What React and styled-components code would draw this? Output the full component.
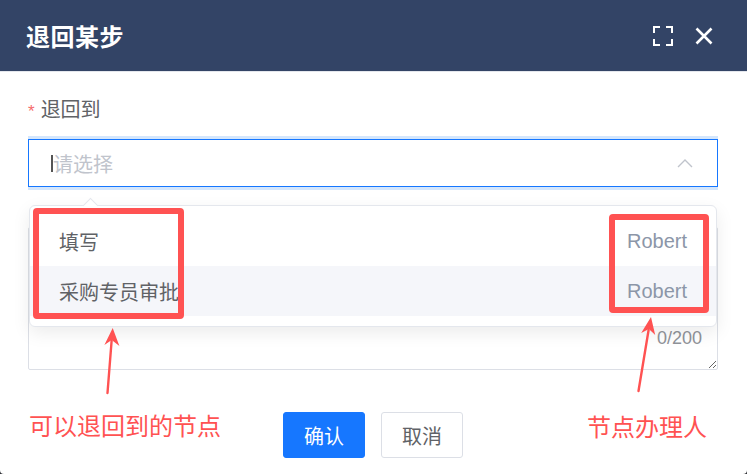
import React from "react";
import styled, { createGlobalStyle } from "styled-components";

const GlobalStyle = createGlobalStyle`
  html, body {
    margin: 0;
    padding: 0;
    background: #2f3136;
  }
  * {
    box-sizing: border-box;
  }
`;

const RED = "#ff5252";

const Dialog = styled.div`
  position: relative;
  width: 747px;
  height: 474px;
  background: #ffffff;
  border-radius: 0 0 4px 4px;
  overflow: hidden;
  display: flex;
  flex-direction: column;
  font-family: "Liberation Sans", "Noto Sans CJK SC", sans-serif;
`;

const Header = styled.div`
  height: 72px;
  flex-shrink: 0;
  background: #334466;
  border-bottom: 1px solid #e4e7ed;
  padding: 0 34px 0 26px;
  display: flex;
  align-items: center;
  justify-content: space-between;
`;

const Title = styled.h1`
  margin: 0;
  font-size: 24px;
  font-weight: 700;
  color: #ffffff;
  letter-spacing: 0.5px;
`;

const HeaderActions = styled.div`
  display: flex;
  align-items: center;
  gap: 22px;
`;

const IconButton = styled.button`
  border: 0;
  padding: 0;
  background: transparent;
  display: flex;
  color: #ffffff;
`;

const Body = styled.div`
  padding: 26px 29px 0 28px;
`;

const Label = styled.div`
  display: flex;
  align-items: flex-start;
  font-size: 20px;
  line-height: 24px;
  color: #606266;
  margin-bottom: 17px;
`;

const Star = styled.span`
  color: #f56c6c;
  font-size: 17px;
  line-height: 1;
  margin: 5px 6px 0 0;
`;

const SelectWrap = styled.div`
  position: relative;
`;

const Select = styled.div`
  height: 48px;
  border: 1px solid #1677ff;
  box-shadow: 0 -3px 0 #d4e6fc, 0 3px 0 #d4e6fc;
  padding: 0 24px 0 22px;
  display: flex;
  align-items: center;
  justify-content: space-between;
`;

const Placeholder = styled.div`
  display: flex;
  align-items: center;
  font-size: 20px;
  color: #c0c4cc;
`;

const Caret = styled.span`
  width: 2px;
  height: 17px;
  background: #555555;
  margin-right: 0;
`;

const Dropdown = styled.div`
  position: absolute;
  top: calc(100% + 18px);
  left: 1px;
  right: 1px;
  z-index: 2;
  background: #ffffff;
  border: 1px solid #e4e7ed;
  border-radius: 6px;
  box-shadow: 0 6px 18px rgba(0, 0, 0, 0.08);
  padding: 10px 0;

  &::before {
    content: "";
    position: absolute;
    top: -6px;
    left: 55px;
    width: 10px;
    height: 10px;
    background: #ffffff;
    border-top: 1px solid #e4e7ed;
    border-left: 1px solid #e4e7ed;
    transform: rotate(45deg);
  }
`;

const Option = styled.div`
  height: 50px;
  padding: 0 29px 0 29px;
  display: flex;
  align-items: center;
  justify-content: space-between;
  font-size: 20px;
  color: #606266;
  background: ${(p) => (p.$hover ? "#f5f6fa" : "transparent")};
`;

const Assignee = styled.span`
  color: #8c96a8;
`;

const TextareaWrap = styled.div`
  position: relative;
  margin-top: 40px;
`;

const Textarea = styled.textarea`
  display: block;
  width: 100%;
  height: 143px;
  border: 1px solid #dcdfe6;
  border-radius: 2px;
  resize: both;
  outline: none;
  font-family: inherit;
`;

const Count = styled.span`
  position: absolute;
  right: 16px;
  bottom: 21px;
  font-size: 18px;
  line-height: 22px;
  color: #909399;
`;

const Footer = styled.div`
  margin-top: 42px;
  display: flex;
  justify-content: center;
  gap: 16px;
`;

const Button = styled.button`
  width: 82px;
  height: 46px;
  border-radius: 3px;
  font-family: inherit;
  font-size: 20px;
  border: 1px solid ${(p) => (p.$primary ? "#1677ff" : "#dcdfe6")};
  background: ${(p) => (p.$primary ? "#1677ff" : "#ffffff")};
  color: ${(p) => (p.$primary ? "#ffffff" : "#606266")};
`;

const Highlight = styled.div`
  position: absolute;
  z-index: 5;
  border: 6px solid ${RED};
  border-radius: 4px;
  left: ${(p) => p.$x}px;
  top: ${(p) => p.$y}px;
  width: ${(p) => p.$w}px;
  height: ${(p) => p.$h}px;
`;

const Note = styled.div`
  position: absolute;
  z-index: 5;
  left: ${(p) => p.$x}px;
  top: ${(p) => p.$y}px;
  font-size: 24px;
  line-height: 30px;
  color: ${RED};
`;

const ArrowLayer = styled.svg`
  position: absolute;
  inset: 0;
  z-index: 5;
  pointer-events: none;
`;

function FullscreenIcon() {
  return (
    <svg width="20" height="20" viewBox="0 0 20 20" fill="none" stroke="currentColor" strokeWidth="2">
      <path d="M1 7V1h6M13 1h6v6M19 13v6h-6M7 19H1v-6" />
    </svg>
  );
}

function CloseIcon() {
  return (
    <svg width="18" height="18" viewBox="0 0 18 18" fill="none" stroke="currentColor" strokeWidth="2.6">
      <path d="M1.5 1.5L16.5 16.5M16.5 1.5L1.5 16.5" />
    </svg>
  );
}

function ChevronUp() {
  return (
    <svg width="16" height="10" viewBox="0 0 16 10" fill="none" stroke="#c0c4cc" strokeWidth="1.4">
      <path d="M1 9L8 2l7 7" />
    </svg>
  );
}

const options = [
  { name: "填写", user: "Robert" },
  { name: "采购专员审批", user: "Robert", hover: true },
];

export default function App() {
  return (
    <>
      <GlobalStyle />
      <Dialog>
        <Header>
          <Title>退回某步</Title>
          <HeaderActions>
            <IconButton>
              <FullscreenIcon />
            </IconButton>
            <IconButton>
              <CloseIcon />
            </IconButton>
          </HeaderActions>
        </Header>

        <Body>
          <Label>
            <Star>*</Star>退回到
          </Label>
          <SelectWrap>
            <Select>
              <Placeholder>
                <Caret />
                请选择
              </Placeholder>
              <ChevronUp />
            </Select>
            <Dropdown>
              {options.map((o) => (
                <Option key={o.name} $hover={o.hover}>
                  <span>{o.name}</span>
                  <Assignee>{o.user}</Assignee>
                </Option>
              ))}
            </Dropdown>
          </SelectWrap>

          <TextareaWrap>
            <Textarea />
            <Count>0/200</Count>
          </TextareaWrap>

          <Footer>
            <Button $primary>确认</Button>
            <Button>取消</Button>
          </Footer>
        </Body>

        <Highlight $x={33} $y={208} $w={151} $h={111} />
        <Highlight $x={609} $y={214} $w={100} $h={99} />

        <ArrowLayer width="747" height="474" viewBox="0 0 747 474">
          <g stroke={RED} strokeWidth="2.4" strokeLinecap="round">
            <line x1="107.5" y1="393" x2="111.6" y2="341" />
            <line x1="638.5" y1="391" x2="648.6" y2="330" />
          </g>
          <g fill={RED}>
            <polygon points="112.7,328 104.4,345 111.7,340 119.4,346" />
            <polygon points="651,317 641.2,333 648.9,329 655.2,335" />
          </g>
        </ArrowLayer>

        <Note $x={29} $y={412}>可以退回到的节点</Note>
        <Note $x={587} $y={413}>节点办理人</Note>
      </Dialog>
    </>
  );
}
